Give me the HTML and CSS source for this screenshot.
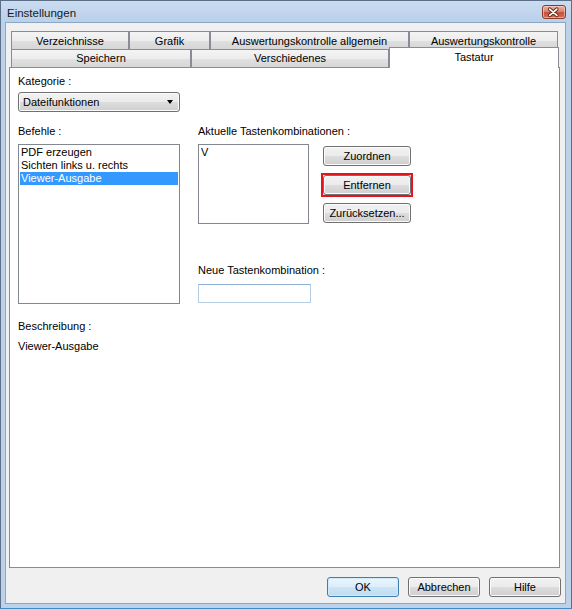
FILE: index.html
```html
<!DOCTYPE html>
<html lang="de">
<head>
    <title>Einstellungen</title>
    <link rel="stylesheet" href="styles.css">
</head>
<body>
    <div class="window">
        <div class="titlebar">
            <span class="title">Einstellungen</span>
            <button class="close-btn" aria-label="Schließen">
                <svg width="24" height="14" viewBox="0 0 24 14">
                    <path d="M8 4 L15.5 10.5 M15.5 4 L8 10.5" stroke="#5a2418" stroke-width="3.6" stroke-linecap="round"/>
                    <path d="M8 4 L15.5 10.5 M15.5 4 L8 10.5" stroke="#ffffff" stroke-width="1.8" stroke-linecap="round"/>
                </svg>
            </button>
        </div>

        <div class="client">
            <div class="tabs">
                <div class="tab-row row-top">
                    <div class="tab">Verzeichnisse</div>
                    <div class="tab">Grafik</div>
                    <div class="tab">Auswertungskontrolle allgemein</div>
                    <div class="tab">Auswertungskontrolle</div>
                </div>
                <div class="tab-row row-bottom">
                    <div class="tab">Speichern</div>
                    <div class="tab">Verschiedenes</div>
                    <div class="tab selected">Tastatur</div>
                </div>
            </div>

            <div class="tab-page">
                <div class="label">Kategorie :</div>
                <div class="combo">
                    <span>Dateifunktionen</span>
                    <span class="combo-arrow"></span>
                </div>

                <div class="columns">
                    <div class="col-left">
                        <div class="label">Befehle :</div>
                        <ul class="listbox commands">
                            <li>PDF erzeugen</li>
                            <li>Sichten links u. rechts</li>
                            <li class="active">Viewer-Ausgabe</li>
                        </ul>
                        <div class="label desc-title">Beschreibung :</div>
                        <div class="label desc-text">Viewer-Ausgabe</div>
                    </div>

                    <div class="col-right">
                        <div class="label">Aktuelle Tastenkombinationen :</div>
                        <div class="shortcut-row">
                            <ul class="listbox shortcuts">
                                <li>V</li>
                            </ul>
                            <div class="shortcut-buttons">
                                <button class="btn">Zuordnen</button>
                                <div class="marked">
                                    <button class="btn">Entfernen</button>
                                </div>
                                <button class="btn">Zurücksetzen...</button>
                            </div>
                        </div>
                        <div class="label new-title">Neue Tastenkombination :</div>
                        <input class="textbox" type="text">
                    </div>
                </div>
            </div>

            <div class="footer">
                <button class="btn default">OK</button>
                <button class="btn">Abbrechen</button>
                <button class="btn">Hilfe</button>
            </div>
        </div>
    </div>
</body>
</html>
```

FILE: styles.css
```css
* {
    box-sizing: border-box;
}

body {
    margin: 0;
    background-color: #bfd4eb;
    font-family: "Liberation Sans", Arial, sans-serif;
    font-size: 11px;
    color: #000;
}

.window {
    width: 572px;
    height: 609px;
    display: flex;
    flex-direction: column;
    background-color: #bcd2eb;
    border: 1px solid #5d6f86;
    border-bottom-color: #3f8dc8;
}

/* title bar */

.titlebar {
    height: 21px;
    display: flex;
    align-items: flex-start;
    background: linear-gradient(#cadcf0, #b9d0ea);
}

.title {
    padding: 4px 0 0 6px;
    font-size: 11.5px;
    line-height: 17px;
    color: #1a1a1a;
}

.close-btn {
    margin: 4px 5px 0 auto;
    width: 24px;
    height: 14px;
    padding: 0;
    border: 1px solid #8a3a2a;
    border-radius: 3px;
    background: linear-gradient(#eab3a6 0%, #d98672 45%, #c75136 55%, #d2705a 100%);
    box-shadow: inset 0 0 0 1px rgba(255, 230, 220, 0.5);
    display: flex;
}

.close-btn svg {
    display: block;
    margin: -1px 0 0 -1px;
}

/* client area */

.client {
    flex: 1;
    display: flex;
    flex-direction: column;
    margin: 0 5px 4px 4px;
    padding: 8px 5px 6px 3px;
    background-color: #f0f0f0;
    border: 1px solid #8da6c3;
}

/* tabs */

.tabs {
    padding: 0 2px;
}

.tab-row {
    display: grid;
    height: 18px;
}

.row-top {
    grid-template-columns: 118px 81px 199px 1fr;
}

.row-bottom {
    grid-template-columns: 180px 198px 1fr;
}

.tab {
    border: 1px solid #898c95;
    border-bottom: none;
    background: linear-gradient(#f4f4f4 0%, #ececec 50%, #e0e0e0 51%, #d6d6d6 100%);
    text-align: center;
    white-space: nowrap;
    overflow: hidden;
}

.row-top .tab {
    padding-top: 2px;
    line-height: 15px;
}

.row-bottom .tab {
    line-height: 16px;
}

.row-bottom .tab.selected {
    position: relative;
    z-index: 1;
    height: 21px;
    margin: -2px -1px 0 0;
    padding-top: 2px;
    line-height: 15px;
    background: #fff;
}

/* tab page */

.tab-page {
    flex: 1;
    padding: 7px 8px 0 8px;
    background-color: #fff;
    border: 1px solid #898c95;
}

.label {
    line-height: 13px;
    white-space: nowrap;
}

.combo {
    width: 162px;
    height: 20px;
    margin-top: 4px;
    padding: 0 6px 0 4px;
    display: flex;
    align-items: center;
    justify-content: space-between;
    border: 1px solid #707070;
    border-radius: 3px;
    background: linear-gradient(#f2f2f2 0%, #ebebeb 50%, #dddddd 51%, #cfcfcf 100%);
    box-shadow: inset 0 0 0 1px #fbfbfb;
}

.combo-arrow {
    width: 0;
    height: 0;
    border-left: 3.5px solid transparent;
    border-right: 3.5px solid transparent;
    border-top: 4px solid #000;
}

.columns {
    display: flex;
    gap: 18px;
    margin-top: 13px;
}

.col-left {
    width: 162px;
}

.listbox {
    list-style: none;
    margin: 6px 0 0 0;
    padding: 1px;
    border: 1px solid #828790;
    background-color: #fff;
}

.listbox li {
    line-height: 13px;
    padding-left: 1px;
    white-space: nowrap;
}

.listbox li.active {
    background-color: #3399ff;
    color: #fff;
}

.commands {
    height: 160px;
}

.desc-title {
    margin-top: 16px;
}

.desc-text {
    margin-top: 7px;
}

.shortcut-row {
    display: flex;
    align-items: flex-start;
    margin-top: 6px;
}

.shortcuts {
    margin: 0;
    width: 111px;
    height: 80px;
}

.shortcut-buttons {
    display: flex;
    flex-direction: column;
    align-items: flex-start;
    margin-left: 14px;
    padding-top: 2px;
}

.shortcut-buttons .btn {
    width: 88px;
}

.marked {
    margin: 7px 0 6px -2px;
    border: 2px solid #e3141b;
    box-shadow: inset 0 0 3px rgba(0, 0, 0, 0.15);
}

.new-title {
    margin-top: 40px;
}

.textbox {
    display: block;
    width: 113px;
    height: 19px;
    margin-top: 7px;
    border: 1px solid #b7cde4;
    border-top-color: #8fb0d2;
    background-color: #fff;
    outline: none;
}

/* buttons */

.btn {
    height: 20px;
    padding: 0;
    font-family: inherit;
    font-size: 11px;
    color: #000;
    border: 1px solid #707070;
    border-radius: 3px;
    background: linear-gradient(#f2f2f2 0%, #ebebeb 50%, #dddddd 51%, #cfcfcf 100%);
    box-shadow: inset 0 0 0 1px #fbfbfb;
    cursor: pointer;
}

.footer {
    display: flex;
    justify-content: flex-end;
    gap: 9px;
    margin: 9px -1px 0 0;
}

.footer .btn {
    width: 72px;
}

.btn.default {
    border-color: #3c7fb1;
    background: linear-gradient(#eaf5fc 0%, #dceef9 50%, #cbe5f6 51%, #bfdcef 100%);
    box-shadow: inset 0 0 0 1px #cfeafb;
}
```
